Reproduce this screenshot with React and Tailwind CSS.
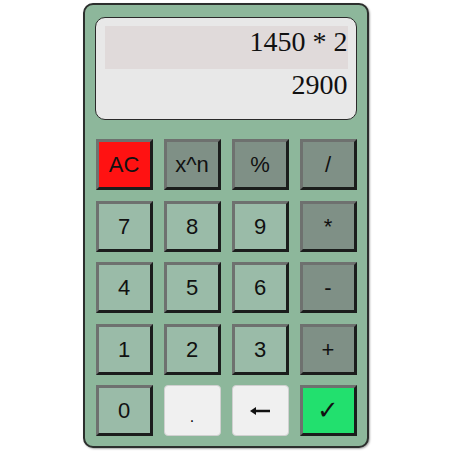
import React from "react";

const num = "bg-[#9abba8]";
const op = "bg-[#7f9086]";

function Key({ label, cls }) {
  return (
    <div
      className={`${cls} flex items-center justify-center border-[3px] border-t-[#6e716f] border-l-[#6e716f] border-b-[#1b1d1c] border-r-[#1b1d1c] text-[22px] text-[#111] font-['Liberation_Sans',Arial,sans-serif]`}
    >
      {label}
    </div>
  );
}

function Plain({ children, cls = "" }) {
  return (
    <div
      className={`flex items-center justify-center rounded-[4px] border border-[#d0d0d0] bg-[#f0f0f0] text-[#111] ${cls}`}
    >
      {children}
    </div>
  );
}

export default function App() {
  return (
    <div className="w-[460px] h-[460px] bg-white">
      <div className="ml-[83px] pt-[3px]">
        <div className="w-[286px] h-[445px] rounded-[10px] border-2 border-[#2c2f2d] bg-[#8db79b] px-[10px] pt-[12px] shadow-[1px_1px_2px_rgba(0,0,0,0.35)]">
          <div className="h-[103px] rounded-[10px] border-[1.5px] border-[#2a2a2a] bg-[#e8e8e8] px-[8.5px] pt-[7.5px] font-['Liberation_Serif','Times_New_Roman',serif] text-[28px] leading-[32px] text-[#111]">
            <div className="h-[43px] bg-[#e0dada] text-right">1450 * 2</div>
            <div className="h-[43px] text-right">2900</div>
          </div>
          <div className="mt-[19px] grid grid-cols-4 grid-rows-[repeat(5,51px)] gap-x-[11px] gap-y-[10.5px] px-[0.5px]">
            <Key label="AC" cls="bg-[#ff1212]" />
            <Key label="x^n" cls={op} />
            <Key label="%" cls={op} />
            <Key label="/" cls={op} />
            <Key label="7" cls={num} />
            <Key label="8" cls={num} />
            <Key label="9" cls={num} />
            <Key label="*" cls={op} />
            <Key label="4" cls={num} />
            <Key label="5" cls={num} />
            <Key label="6" cls={num} />
            <Key label="-" cls={op} />
            <Key label="1" cls={num} />
            <Key label="2" cls={num} />
            <Key label="3" cls={num} />
            <Key label="+" cls={op} />
            <Key label="0" cls={num} />
            <Plain cls="pt-[12px] text-[16px] font-['Liberation_Sans',Arial,sans-serif]">.</Plain>
            <Plain>
              <svg width="20" height="10" viewBox="0 0 20 10">
                <path d="M0 5 L6 1 L6 3.8 L20 3.8 L20 6.2 L6 6.2 L6 9 Z" fill="#111" />
              </svg>
            </Plain>
            <Key label="✓" cls="bg-[#22e06e] !text-[26px] font-['DejaVu_Sans',sans-serif]" />
          </div>
        </div>
      </div>
    </div>
  );
}
